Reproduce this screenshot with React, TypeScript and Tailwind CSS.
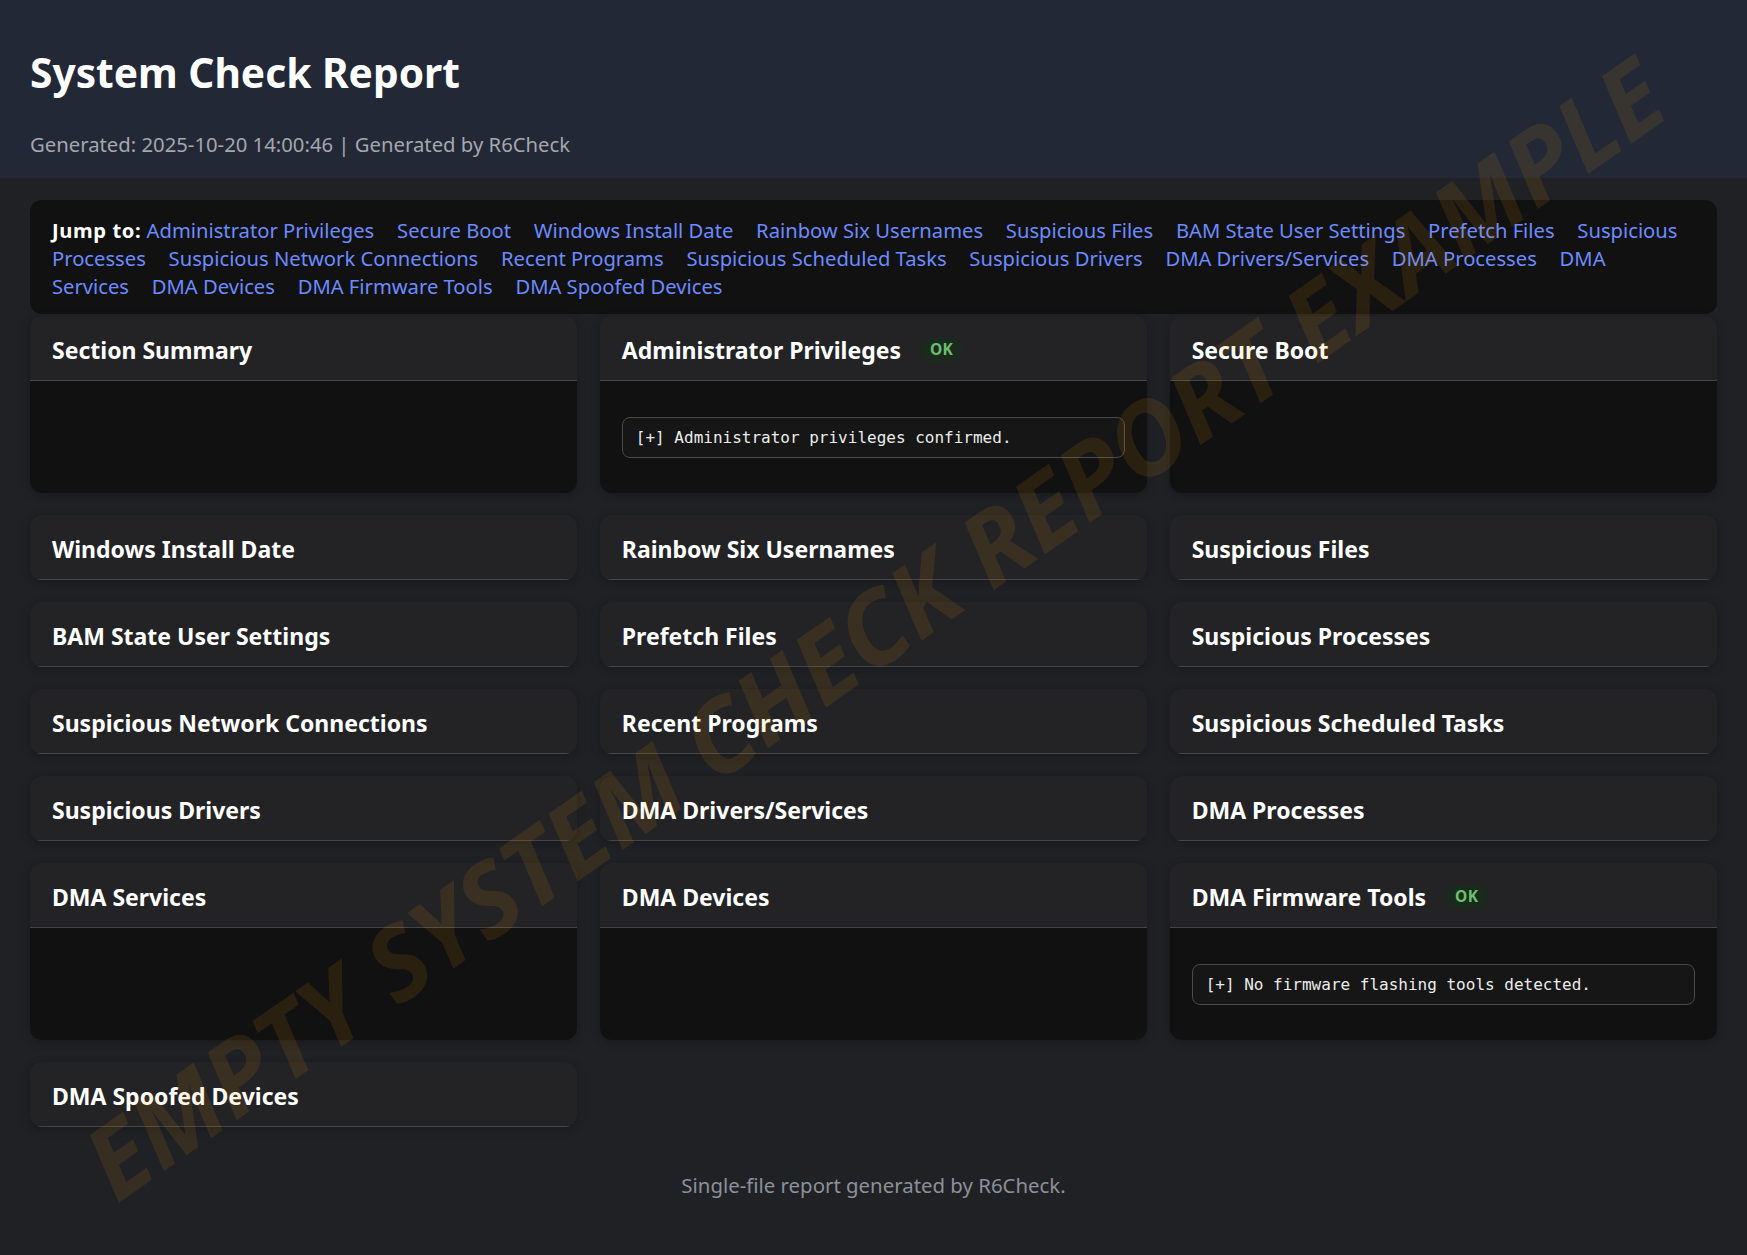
type Section = {
    title: string;
    ok?: boolean;
    log?: string;
    body?: boolean;
};

const links = [
    'Administrator Privileges',
    'Secure Boot',
    'Windows Install Date',
    'Rainbow Six Usernames',
    'Suspicious Files',
    'BAM State User Settings',
    'Prefetch Files',
    'Suspicious Processes',
    'Suspicious Network Connections',
    'Recent Programs',
    'Suspicious Scheduled Tasks',
    'Suspicious Drivers',
    'DMA Drivers/Services',
    'DMA Processes',
    'DMA Services',
    'DMA Devices',
    'DMA Firmware Tools',
    'DMA Spoofed Devices',
];

const sections: Section[] = [
    { title: 'Section Summary', body: true },
    { title: 'Administrator Privileges', ok: true, log: '[+] Administrator privileges confirmed.', body: true },
    { title: 'Secure Boot', body: true },
    { title: 'Windows Install Date' },
    { title: 'Rainbow Six Usernames' },
    { title: 'Suspicious Files' },
    { title: 'BAM State User Settings' },
    { title: 'Prefetch Files' },
    { title: 'Suspicious Processes' },
    { title: 'Suspicious Network Connections' },
    { title: 'Recent Programs' },
    { title: 'Suspicious Scheduled Tasks' },
    { title: 'Suspicious Drivers' },
    { title: 'DMA Drivers/Services' },
    { title: 'DMA Processes' },
    { title: 'DMA Services', body: true },
    { title: 'DMA Devices', body: true },
    { title: 'DMA Firmware Tools', ok: true, log: '[+] No firmware flashing tools detected.', body: true },
    { title: 'DMA Spoofed Devices' },
];

function Card({ section }: { section: Section }) {
    return (
        <div className="flex flex-col overflow-hidden rounded-[12px] bg-[#232326] shadow-[0_2px_8px_rgba(0,0,0,0.25)]">
            <div className="flex items-center border-b border-[#45464a] px-[22px] pb-[16px] pt-[20px]">
                <h2 className="text-[23px] font-bold leading-[28px] text-white">{section.title}</h2>
                {section.ok && (
                    <span className="ml-[19px] inline-flex h-[24px] items-center rounded-full bg-[#1a2a1d] px-[10px] text-[15.5px] font-bold tracking-[0.3px] text-[#6cbf6f]">
                        OK
                    </span>
                )}
            </div>
            {section.body && (
                <div className="flex-1 bg-[#111111] px-[22px] pb-[35px] pt-[36px]">
                    {section.log && (
                        <div className="rounded-[8px] border border-[#4a4a4c] bg-[#161616] px-[13px] py-[9px] font-['DejaVu_Sans_Mono',monospace] text-[16px] leading-[21px] text-[#ececec]">
                            {section.log}
                        </div>
                    )}
                </div>
            )}
        </div>
    );
}

export default function App() {
    return (
        <div className="relative min-h-screen bg-[#202125] font-['Noto_Sans',sans-serif] text-white">
            <header className="bg-[#222836] px-[30px] pb-[20px] pt-[48px]">
                <h1 className="text-[40.7px] font-bold leading-[49px] text-white">System Check Report</h1>
                <p className="mt-[33px] text-[20.3px] leading-[28px] text-[#a3a7ae]">
                    Generated: 2025-10-20 14:00:46 | Generated by R6Check
                </p>
            </header>

            <main className="px-[30px] pb-[54px] pt-[22px]">
                <nav className="mb-[2px] rounded-[12px] bg-[#111111] px-[22px] pb-[14px] pt-[16px] text-[20.2px] leading-[28px]">
                    <span className="font-bold tracking-[0.6px] text-white">Jump to:</span>{' '}
                    {links.map((l) => (
                        <span key={l}>
                            <a href="#" className="mr-[17.5px] text-[#6c8bff]">
                                {l}
                            </a>{' '}
                        </span>
                    ))}
                </nav>

                <div className="grid grid-cols-3 gap-x-[22.5px] gap-y-[22px]">
                    {sections.map((s) => (
                        <Card key={s.title} section={s} />
                    ))}
                </div>

                <footer className="mt-[44px] text-center text-[20.4px] leading-[28px] text-[#8c9099]">
                    Single-file report generated by R6Check.
                </footer>
            </main>

            <div className="pointer-events-none fixed inset-0 z-50 flex items-center justify-center overflow-hidden">
                <span className="-rotate-[35deg] whitespace-nowrap text-[101px] font-bold italic text-[rgba(255,165,0,0.1)]">
                    EMPTY SYSTEM CHECK REPORT EXAMPLE
                </span>
            </div>
        </div>
    );
}
